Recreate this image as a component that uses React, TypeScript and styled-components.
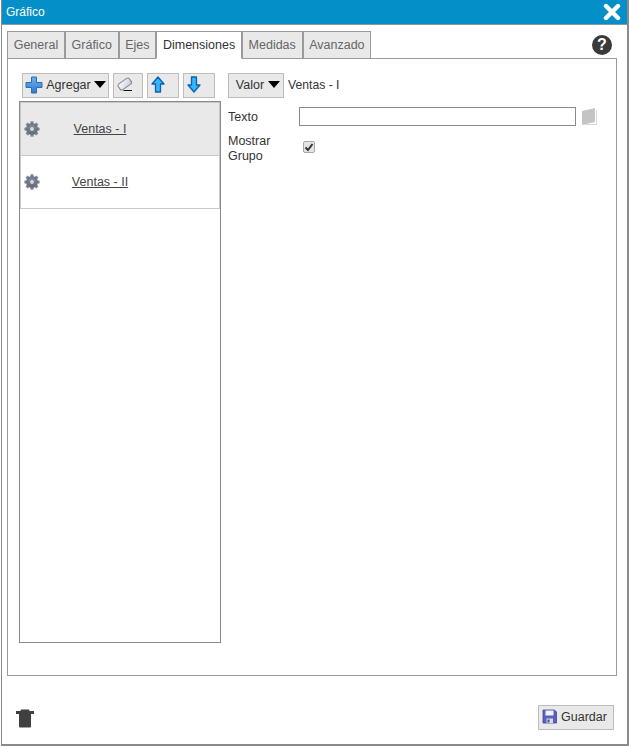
import React from "react";
import styled, { createGlobalStyle } from "styled-components";

const GlobalStyle = createGlobalStyle`
  html, body {
    margin: 0;
    padding: 0;
    background: #fff;
    overflow: hidden;
  }
  * {
    box-sizing: border-box;
  }
`;

const Dialog = styled.div`
  width: 628px;
  height: 746px;
  margin-left: 1px;
  display: flex;
  flex-direction: column;
  border-left: 1px solid #8a8a8a;
  border-right: 2px solid #8a8a8a;
  border-bottom: 2px solid #8a8a8a;
  font-family: "Liberation Sans", Arial, sans-serif;
  font-size: 12.5px;
  color: #333;
  background: #fff;
`;

const TitleBar = styled.div`
  height: 25px;
  flex: none;
  display: flex;
  align-items: center;
  justify-content: space-between;
  padding: 0 6px 1px 4px;
  background: #058fc9;
  border-bottom: 1px solid #8a9aa3;
  color: #fff;
  font-size: 12px;
`;

const Body = styled.div`
  flex: 1;
  display: flex;
  flex-direction: column;
  padding: 5px 10px 0 5px;
  min-height: 0;
`;

const TabRow = styled.div`
  height: 28px;
  flex: none;
  display: flex;
  align-items: flex-end;
  justify-content: space-between;
`;

const Tabs = styled.div`
  display: flex;
  margin-bottom: -1px;
  z-index: 1;
`;

const Tab = styled.div<{ $active?: boolean }>`
  height: 28px;
  padding: 0 5.7px;
  display: flex;
  align-items: center;
  border: 1px solid #9a9a9a;
  border-bottom: ${(p) => (p.$active ? "1px solid #fff" : "1px solid #9a9a9a")};
  background: ${(p) => (p.$active ? "#fff" : "#e9e9e9")};
  color: ${(p) => (p.$active ? "#333" : "#666")};
`;

const Help = styled.div`
  width: 20px;
  height: 20px;
  margin: 0 5px 3px 0;
  display: flex;
  align-items: center;
  justify-content: center;
  border-radius: 50%;
  background: #3a3a3a;
  color: #fff;
  font-size: 16px;
  font-weight: bold;
`;

const Panel = styled.div`
  height: 618px;
  flex: none;
  display: flex;
  gap: 7px;
  padding: 14px 0 0 11px;
  border: 1px solid #9a9a9a;
`;

const LeftColumn = styled.div`
  width: 202px;
  flex: none;
  display: flex;
  flex-direction: column;
  gap: 3px;
`;

const Toolbar = styled.div`
  height: 25px;
  display: flex;
  gap: 4px;
  padding-left: 3px;
`;

const ToolButton = styled.div<{ $width: number }>`
  width: ${(p) => p.$width}px;
  height: 25px;
  display: flex;
  align-items: center;
  justify-content: center;
  gap: 3px;
  padding-bottom: 2px;
  background: #e9e9e9;
  border: 1px solid #bdbdbd;
  color: #333;
`;

const IconButton = styled(ToolButton)`
  justify-content: flex-start;
  padding-left: 3px;
`;

const ValueButton = styled(ToolButton)`
  gap: 4px;
  padding-left: 4px;
`;

const Caret = styled.span`
  width: 0;
  height: 0;
  border-left: 6.5px solid transparent;
  border-right: 6.5px solid transparent;
  border-top: 7px solid #000;
`;

const List = styled.div`
  height: 542px;
  border: 1px solid #8a8a8a;
`;

const Row = styled.div<{ $selected?: boolean }>`
  height: ${(p) => (p.$selected ? 54 : 53)}px;
  position: relative;
  display: flex;
  align-items: center;
  justify-content: center;
  padding-right: 40px;
  border: 1px solid #c8c8c8;
  border-top: ${(p) => (p.$selected ? "1px solid #c8c8c8" : "none")};
  background: ${(p) => (p.$selected ? "#e9e9e9" : "#fff")};
`;

const GearSlot = styled.span`
  position: absolute;
  left: 3px;
  top: 18px;
  line-height: 0;
`;

const RowLabel = styled.span`
  text-decoration: underline;
  color: #444;
`;

const RightColumn = styled.div`
  flex: 1;
  display: flex;
  flex-direction: column;
`;

const ValueBar = styled.div`
  height: 25px;
  display: flex;
  align-items: center;
  gap: 4px;
`;

const ValueText = styled.span`
  font-size: 12.2px;
  padding-bottom: 2px;
`;

const FieldRow = styled.div`
  display: flex;
  align-items: center;
  margin-top: 8px;
  height: 21px;
`;

const FieldLabel = styled.label`
  width: 71px;
  flex: none;
  line-height: 15px;
`;

const InputLabel = styled(FieldLabel)`
  padding-top: 1px;
`;

const TextInput = styled.div`
  width: 277px;
  height: 19px;
  border: 1px solid #8a8a8a;
  background: #fff;
`;

const BookSlot = styled.span`
  margin-left: 5px;
  line-height: 0;
`;

const CheckRow = styled.div`
  display: flex;
  align-items: flex-start;
  margin-top: 7px;
`;

const CheckBox = styled.span`
  width: 12px;
  height: 12px;
  margin: 7px 0 0 4px;
  display: flex;
  align-items: center;
  justify-content: center;
  line-height: 0;
  background: #e4e4e4;
  border: 1px solid #a8a8a8;
  border-radius: 2px;
`;

const Footer = styled.div`
  flex: 1;
  display: flex;
  align-items: center;
  justify-content: space-between;
  padding: 15px 3px 0 9px;
`;

const TrashSlot = styled.span`
  line-height: 0;
`;

const SaveButton = styled.div`
  width: 76px;
  height: 25px;
  display: flex;
  align-items: center;
  justify-content: center;
  gap: 4px;
  padding: 0 3px 2px 0;
  background: #e9e9e9;
  border: 1px solid #bdbdbd;
`;

const CloseIcon = () => (
  <svg width="18" height="18" viewBox="0 0 18 18">
    <path d="M3 3L15 15M15 3L3 15" stroke="#fff" strokeWidth="4.4" strokeLinecap="round" />
  </svg>
);

const PlusIcon = () => (
  <svg width="18" height="18" viewBox="0 0 18 18">
    <defs>
      <linearGradient id="plusFill" x1="0" y1="0" x2="0" y2="1">
        <stop offset="0" stopColor="#6fb0ee" />
        <stop offset="1" stopColor="#2f7bd0" />
      </linearGradient>
    </defs>
    <path
      d="M6.500 1h5v5.500h5.500v5h-5.500v5.500h-5v-5.500H1v-5h5.500z"
      fill="url(#plusFill)"
      stroke="#2a6cb8"
      strokeWidth="1"
      strokeLinejoin="round"
    />
  </svg>
);

const EraserIcon = () => (
  <svg width="18" height="16" viewBox="0 0 18 16">
    <defs>
      <linearGradient id="eraserFill" x1="0" y1="0" x2="1" y2="1">
        <stop offset="0" stopColor="#ffffff" />
        <stop offset="1" stopColor="#c3cbd8" />
      </linearGradient>
    </defs>
    <rect
      x="1"
      y="3.500"
      width="13.500"
      height="7"
      rx="2"
      transform="rotate(-35 7.750 7)"
      fill="url(#eraserFill)"
      stroke="#7d8490"
      strokeWidth="1"
    />
    <path d="M6.500 13.500h8.500" stroke="#111" strokeWidth="1" />
  </svg>
);

const UpIcon = () => (
  <svg width="14" height="17" viewBox="0 0 14 17">
    <path d="M7 1l6 7H9.500v8h-5V8H1z" fill="#35b6f5" stroke="#0f5fb0" strokeWidth="1.300" strokeLinejoin="round" />
  </svg>
);

const DownIcon = () => (
  <svg width="14" height="17" viewBox="0 0 14 17">
    <path d="M7 16l6-7H9.500V1h-5v8H1z" fill="#35b6f5" stroke="#0f5fb0" strokeWidth="1.300" strokeLinejoin="round" />
  </svg>
);

const GearIcon = () => (
  <svg width="16" height="16" viewBox="0 0 16 16">
    <defs>
      <linearGradient id="gearFill" x1="0" y1="0" x2="0" y2="1">
        <stop offset="0" stopColor="#8d9299" />
        <stop offset="1" stopColor="#596a7c" />
      </linearGradient>
    </defs>
    <g fill="url(#gearFill)">
      <circle cx="8" cy="8" r="6" />
      {[0, 45, 90, 135, 180, 225, 270, 315].map((angle) => (
        <rect key={angle} x="6.400" y="0.300" width="3.200" height="3.400" rx="0.500" transform={`rotate(${angle} 8 8)`} />
      ))}
    </g>
    <circle cx="8" cy="8" r="1.900" fill="#d8dadd" />
  </svg>
);

const BookIcon = () => (
  <svg width="17" height="19" viewBox="0 0 17 19">
    <path d="M1 4L14 1v14L1 18z" fill="#c4c4c4" />
    <path d="M15 3h1v15H3v-1h12z" fill="#d8d8d8" />
  </svg>
);

const CheckMark = () => (
  <svg width="10" height="10" viewBox="0 0 10 10">
    <path d="M1.500 5.500L4 8l4.500-6" fill="none" stroke="#333" strokeWidth="2" />
  </svg>
);

const SaveIcon = () => (
  <svg width="15" height="15" viewBox="0 0 15 15">
    <path d="M1 1h11.500L14.500 3v11H1z" fill="#5a5fc0" stroke="#3f4396" strokeWidth="0.800" />
    <path d="M3.500 1.500h8v5h-8z" fill="#f2f2f6" />
    <path d="M4.500 9.500h6.500v4.500H4.500z" fill="#d8d9e6" />
    <path d="M5.500 10.500h2v3h-2z" fill="#444a9c" />
  </svg>
);

const TrashIcon = () => (
  <svg width="18" height="20" viewBox="0 0 18 20" fill="#404040">
    <path d="M5 1.500h8l.5 1.500H18v3H0V3h4.500z" />
    <path d="M3 6h12v12.500a1 1 0 0 1-1 1H4a1 1 0 0 1-1-1z" />
  </svg>
);

const tabs = ["General", "Gráfico", "Ejes", "Dimensiones", "Medidas", "Avanzado"];

export default function App() {
  return (
    <>
      <GlobalStyle />
      <Dialog>
        <TitleBar>
          <span>Gráfico</span>
          <CloseIcon />
        </TitleBar>
        <Body>
          <TabRow>
            <Tabs>
              {tabs.map((tab) => (
                <Tab key={tab} $active={tab === "Dimensiones"}>
                  {tab}
                </Tab>
              ))}
            </Tabs>
            <Help>?</Help>
          </TabRow>
          <Panel>
            <LeftColumn>
              <Toolbar>
                <ToolButton $width={87}>
                  <PlusIcon />
                  Agregar
                  <Caret />
                </ToolButton>
                <IconButton $width={30}>
                  <EraserIcon />
                </IconButton>
                <IconButton $width={32}>
                  <UpIcon />
                </IconButton>
                <IconButton $width={32}>
                  <DownIcon />
                </IconButton>
              </Toolbar>
              <List>
                <Row $selected>
                  <GearSlot>
                    <GearIcon />
                  </GearSlot>
                  <RowLabel>Ventas - I</RowLabel>
                </Row>
                <Row>
                  <GearSlot>
                    <GearIcon />
                  </GearSlot>
                  <RowLabel>Ventas - II</RowLabel>
                </Row>
              </List>
            </LeftColumn>
            <RightColumn>
              <ValueBar>
                <ValueButton $width={56}>
                  Valor
                  <Caret />
                </ValueButton>
                <ValueText>Ventas - I</ValueText>
              </ValueBar>
              <FieldRow>
                <InputLabel>Texto</InputLabel>
                <TextInput />
                <BookSlot>
                  <BookIcon />
                </BookSlot>
              </FieldRow>
              <CheckRow>
                <FieldLabel>
                  Mostrar
                  <br />
                  Grupo
                </FieldLabel>
                <CheckBox>
                  <CheckMark />
                </CheckBox>
              </CheckRow>
            </RightColumn>
          </Panel>
          <Footer>
            <TrashSlot>
              <TrashIcon />
            </TrashSlot>
            <SaveButton>
              <SaveIcon />
              Guardar
            </SaveButton>
          </Footer>
        </Body>
      </Dialog>
    </>
  );
}
